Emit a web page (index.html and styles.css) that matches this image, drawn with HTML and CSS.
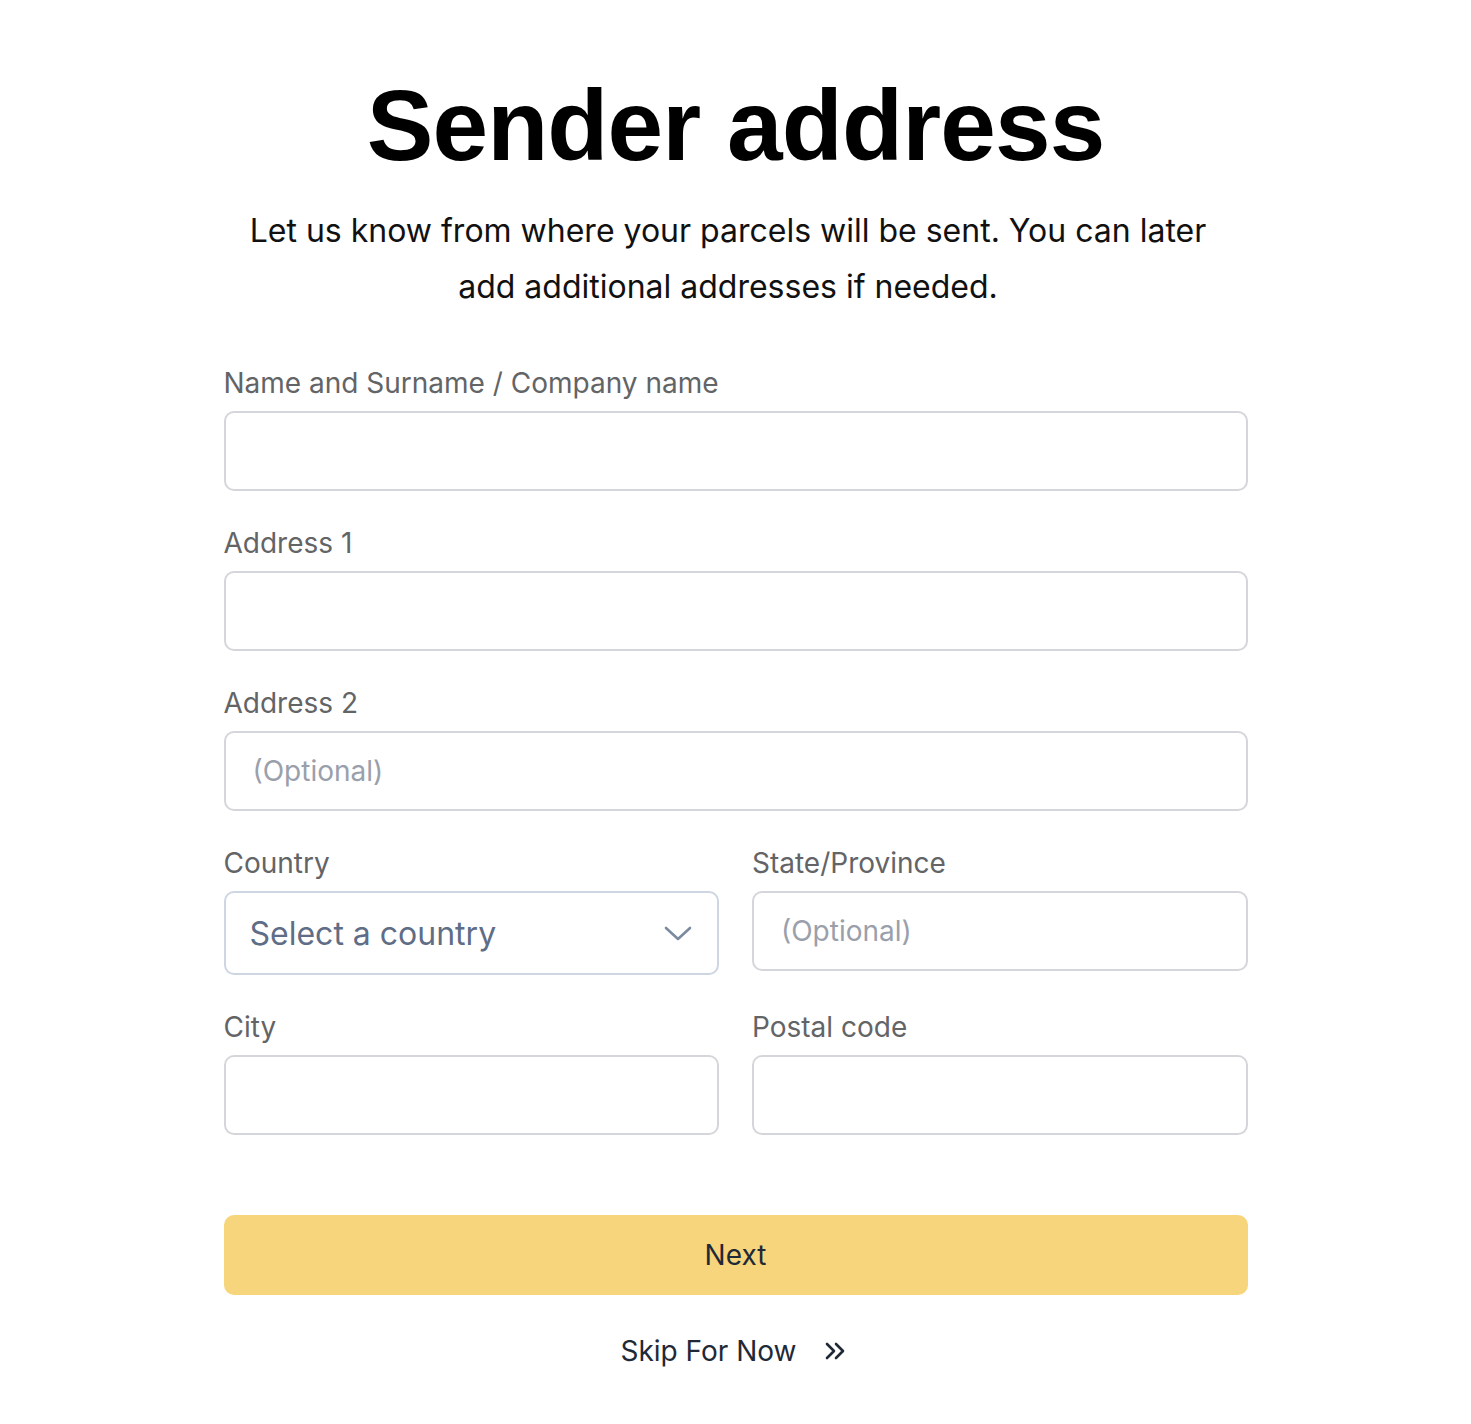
FILE: index.html
```html
<!DOCTYPE html>
<html lang="en">
<head>
<meta charset="utf-8">
<title>Sender address</title>
<link rel="stylesheet" href="styles.css">
</head>
<body>
<main class="page">
  <h1 class="title">Sender address</h1>
  <p class="intro">Let us know from where your parcels will be sent. You can later add additional addresses if needed.</p>

  <form class="form">
    <div class="field">
      <label class="label" for="name">Name and Surname / Company name</label>
      <input class="input" id="name" type="text">
    </div>
    <div class="field">
      <label class="label" for="addr1">Address 1</label>
      <input class="input" id="addr1" type="text">
    </div>
    <div class="field">
      <label class="label" for="addr2">Address 2</label>
      <input class="input" id="addr2" type="text" placeholder="(Optional)">
    </div>
    <div class="row">
      <div class="field">
        <label class="label" for="country">Country</label>
        <div class="select" id="country">
          <span class="select-text">Select a country</span>
          <svg class="chevron" width="30" height="18" viewBox="0 0 30 18" fill="none" stroke="#7c8aa0" stroke-width="2.6" stroke-linecap="round" stroke-linejoin="round"><path d="M3 4l12 11L27 4"/></svg>
        </div>
      </div>
      <div class="field">
        <label class="label" for="state">State/Province</label>
        <input class="input" id="state" type="text" placeholder="(Optional)">
      </div>
    </div>
    <div class="row">
      <div class="field">
        <label class="label" for="city">City</label>
        <input class="input" id="city" type="text">
      </div>
      <div class="field">
        <label class="label" for="zip">Postal code</label>
        <input class="input" id="zip" type="text">
      </div>
    </div>

    <button class="next" type="button">Next</button>
    <a class="skip" href="#">Skip For Now
      <svg class="skip-icon" width="22" height="20" viewBox="0 0 22 20" fill="none" stroke="#1f2937" stroke-width="2.6" stroke-linecap="round" stroke-linejoin="round"><path d="M3 3l7 7-7 7M12 3l7 7-7 7"/></svg>
    </a>
  </form>
</main>
</body>
</html>
```
FILE: styles.css
```css
* { box-sizing: border-box; }

body {
  margin: 0;
  background: #ffffff;
  font-family: Inter, "Noto Sans", sans-serif;
  color: #111;
}

.page {
  width: 1024px;
  margin: 0 auto;
  padding-top: 68px;
  display: flex;
  flex-direction: column;
  align-items: center;
}

.title {
  margin: 0;
  font-family: "Liberation Sans", Arial, sans-serif;
  font-weight: 700;
  font-size: 100px;
  line-height: 114px;
  letter-spacing: -0.9px;
  color: #000;
}

.intro {
  margin: 21px 0 0;
  width: 990px;
  padding-right: 15px;
  text-align: center;
  font-size: 32px;
  line-height: 56px;
  color: #111;
}

.form {
  width: 100%;
  margin-top: 51px;
  display: flex;
  flex-direction: column;
  gap: 35px;
}

.row {
  display: grid;
  grid-template-columns: 1fr 1fr;
  column-gap: 33px;
  align-items: start;
}

.field {
  display: flex;
  flex-direction: column;
  gap: 11px;
}

.label {
  font-size: 28px;
  line-height: 34px;
  color: #636466;
}

.input {
  height: 80px;
  width: 100%;
  border: 2px solid #d4d6db;
  border-radius: 10px;
  padding: 0 27px;
  font-family: inherit;
  font-size: 28px;
  color: #111;
  background: #fff;
  outline: none;
}

.input::placeholder { color: #9aa0ab; }

.select {
  height: 84px;
  border: 2px solid #cdd6e2;
  border-radius: 10px;
  padding: 0 24px;
  display: flex;
  align-items: center;
  justify-content: space-between;
}

.select-text {
  font-size: 32px;
  color: #5f6d86;
}

.next {
  margin-top: 45px;
  height: 80px;
  border: none;
  border-radius: 10px;
  background: #f7d57c;
  font-family: inherit;
  font-size: 28px;
  color: #1f2937;
}

.skip {
  align-self: center;
  margin-top: 4px;
  margin-right: 5px;
  display: flex;
  align-items: center;
  gap: 27px;
  font-size: 28px;
  line-height: 34px;
  color: #1f2937;
  text-decoration: none;
}
```
